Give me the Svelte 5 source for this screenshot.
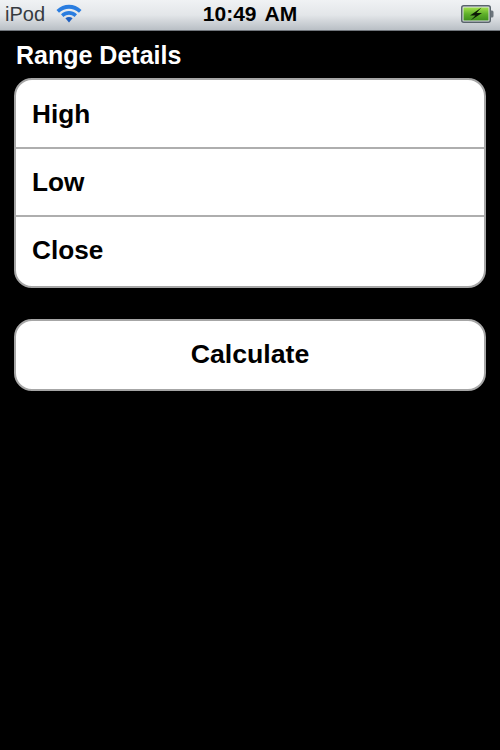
<script lang="ts">
	const fields = ['High', 'Low', 'Close']
</script>

<main>
	<header class="status">
		<div class="left">
			<span class="carrier">iPod</span>
			<svg class="wifi" width="26" height="20" viewBox="0 0 26 20">
				<path d="M0.5 7C7.5 0 18.5 0 25.5 7L23 9.8C17 4.4 9 4.4 3 9.8Z" fill="#2a7de0" />
				<path d="M5 11.2C10 7 16 7 21 11.2L18.6 13.9C15 10.9 11 10.9 7.4 13.9Z" fill="#2a7de0" />
				<path d="M9.4 15.2C11.5 13.5 14.5 13.5 16.6 15.2L13 19.4Z" fill="#1d5fc0" />
			</svg>
		</div>
		<span class="time">10:49 AM</span>
		<svg class="battery" width="33" height="18" viewBox="0 0 33 18">
			<defs>
				<linearGradient id="charge" x1="0" y1="0" x2="0" y2="1">
					<stop offset="0" stop-color="#9fe04a" />
					<stop offset="0.5" stop-color="#5fb02a" />
					<stop offset="1" stop-color="#3f8f1c" />
				</linearGradient>
			</defs>
			<rect x="0.75" y="0.75" width="28.5" height="16.5" rx="2" fill="#dfe3e6" stroke="#59636b" stroke-width="1.5" />
			<rect x="2.5" y="2.5" width="25" height="13" fill="url(#charge)" />
			<path d="M29.5 5.5h1.5a1.5 1.5 0 0 1 1.5 1.5v4a1.5 1.5 0 0 1 -1.5 1.5h-1.5Z" fill="#6b747b" />
			<path d="M20.5 2.5L9 10.5h5.5L9.5 15.5L21 8h-5.5Z" fill="#0c1a06" />
		</svg>
	</header>

	<section class="content">
		<h2>Range Details</h2>
		<div class="group">
			{#each fields as field}
				<div class="row">{field}</div>
			{/each}
		</div>
		<button class="calc">Calculate</button>
	</section>
</main>

<style>
	:global(body) {
		background: #000;
	}

	main {
		width: 500px;
		height: 750px;
		background: #000;
		font-family: 'Liberation Sans', Arial, sans-serif;
		overflow: hidden;
	}

	.status {
		height: 31px;
		box-sizing: border-box;
		display: flex;
		align-items: center;
		justify-content: space-between;
		padding: 0 5px 2px 5px;
		background: linear-gradient(#f0f2f4, #e3e6e9 50%, #b9bfc5);
		border-bottom: 1px solid #70757b;
		position: relative;
	}

	.left {
		display: flex;
		align-items: center;
		gap: 11px;
	}

	.carrier {
		font-size: 20px;
		color: #363b40;
	}

	.wifi {
		display: block;
		margin-top: -2px;
	}

	.time {
		position: absolute;
		left: 0;
		right: 0;
		text-align: center;
		font-size: 21px;
		font-weight: 700;
		color: #000;
		word-spacing: 3px;
	}

	.battery {
		display: block;
		margin-right: 1px;
	}

	.content {
		padding: 9px 14px 0 14px;
	}

	h2 {
		margin: 0 0 8px 2px;
		font-size: 25px;
		line-height: 30px;
		font-weight: 700;
		color: #fff;
	}

	.group,
	.calc {
		display: block;
		width: 100%;
		box-sizing: border-box;
		background: #fff;
		border: 2px solid #a6a6a6;
		border-radius: 18px;
		color: #000;
	}

	.group {
		padding-top: 1px;
	}

	.row {
		height: 68px;
		box-sizing: border-box;
		padding-left: 16px;
		line-height: 67px;
		font-size: 26.2px;
		font-weight: 700;
		border-bottom: 2px solid #aeaeae;
	}

	.row:last-child {
		height: 69px;
		border-bottom: 0;
	}

	.calc {
		height: 72px;
		margin-top: 31px;
		padding: 0 0 1px 0;
		font-family: inherit;
		font-size: 26.7px;
		font-weight: 700;
	}
</style>
